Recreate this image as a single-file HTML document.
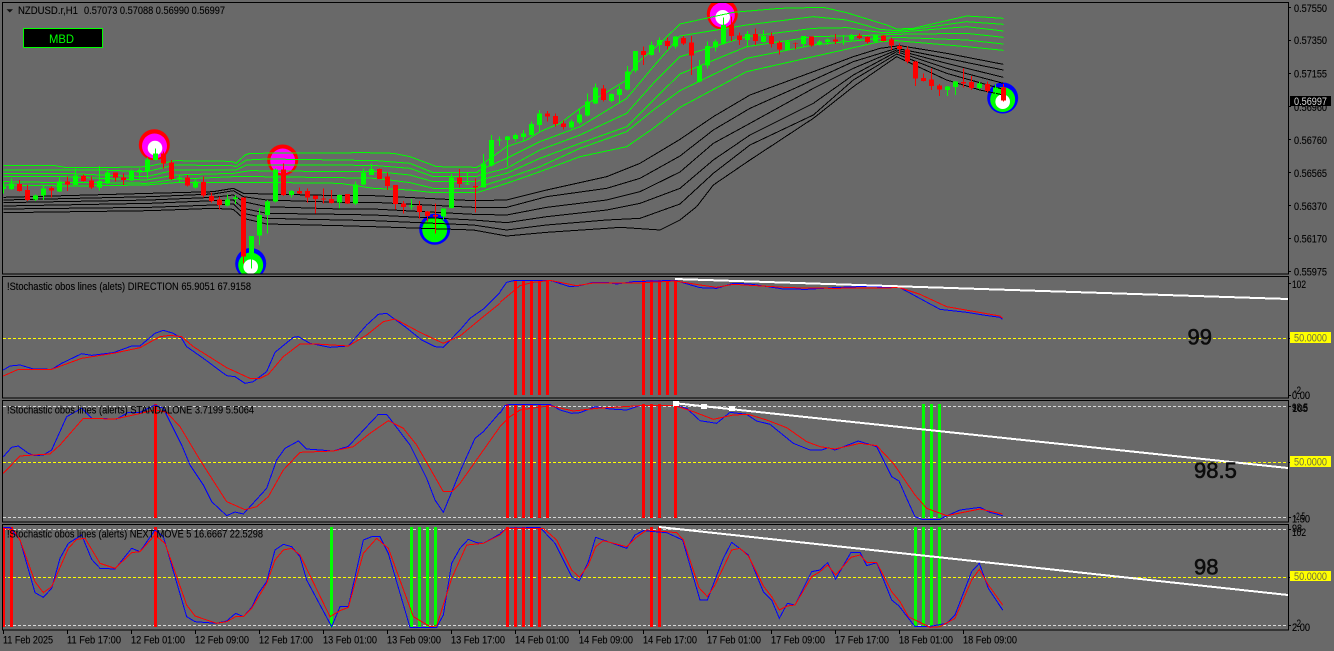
<!DOCTYPE html>
<html><head><meta charset="utf-8"><style>
html,body{margin:0;padding:0;background:#696969;width:1334px;height:651px;overflow:hidden}
svg{position:absolute;left:0;top:0;display:block}
polyline{fill:none;vector-effect:non-scaling-stroke;shape-rendering:crispEdges;stroke-width:1}
line{shape-rendering:crispEdges}
rect,path.c{shape-rendering:crispEdges}
text{font-family:"Liberation Sans",sans-serif;font-size:11px;fill:#000;stroke:#000;stroke-width:.12px}
.g polyline{stroke:#00ff00}
.k polyline{stroke:#000}
.b{stroke:#0000ff}
.r{stroke:#ff0000}
.y{stroke:#ffff00;stroke-dasharray:3 2}
.w{stroke:#d8d8d8;stroke-dasharray:3 2}
.big{font-size:22px;fill:#0c0c0c;stroke:#0c0c0c;stroke-width:.6px}
.nos{stroke:none}
</style></head><body>
<svg width="1334" height="651" viewBox="0 0 1334 651" xmlns="http://www.w3.org/2000/svg">
<defs>
<clipPath id="m"><rect x="3" y="3" width="1285" height="271"/></clipPath>
</defs>
<rect width="1334" height="651" fill="#696969"/>

<!-- dashed levels -->
<line class="y" x1="3" x2="1288" y1="338.5" y2="338.5"/>
<line class="y" x1="3" x2="1288" y1="462.5" y2="462.5"/>
<line class="y" x1="3" x2="1288" y1="577.5" y2="577.5"/>
<line class="w" x1="3" x2="1288" y1="406.5" y2="406.5"/>
<line class="w" x1="3" x2="1288" y1="517.5" y2="517.5"/>
<line class="w" x1="3" x2="1288" y1="529.5" y2="529.5"/>
<line class="w" x1="3" x2="1288" y1="625.5" y2="625.5"/>

<!-- main chart -->
<g clip-path="url(#m)">
<circle cx="154.3" cy="144.7" r="15.5" fill="#f00"/><circle cx="154.5" cy="146" r="12.5" fill="#f0f"/><circle cx="155" cy="148" r="7.3" fill="#fff"/>
<circle cx="282.7" cy="160" r="15.5" fill="#f00"/><circle cx="282.7" cy="161" r="12.5" fill="#f0f"/>
<circle cx="250.7" cy="263.5" r="15.5" fill="#00f"/><circle cx="250.7" cy="265" r="12.5" fill="#0f0"/><circle cx="250.7" cy="266.7" r="7.3" fill="#fff"/>
<circle cx="434.7" cy="229.3" r="15.5" fill="#00f"/><circle cx="434.7" cy="229.8" r="12.5" fill="#0f0"/>
<circle cx="722.3" cy="14" r="15.5" fill="#f00"/><circle cx="722.3" cy="15" r="12.5" fill="#f0f"/><circle cx="722.7" cy="17.3" r="7.3" fill="#fff"/>
<circle cx="1002.7" cy="98" r="15.5" fill="#00f"/><circle cx="1002.7" cy="99.5" r="12.5" fill="#0f0"/><circle cx="1002.7" cy="101.7" r="7.3" fill="#fff"/>

<g transform="scale(.33333)">
<g class="g">
<polyline points="10,497 165,497 200,503 300,503 440,500 525,482 695,484 708,490 735,465 750,460 1100,458 1180,460 1230,470 1270,485 1310,500 1430,502 1440,497 1520,440 1580,420 1620,395 1680,370 1740,325 1780,300 1880,240 1910,190 1980,130 2040,72 2200,37 2340,25 2470,22 2540,38 2660,75 2690,87 2740,85 2900,48 3010,55"/>
<polyline points="10,510 165,510 300,510 440,515 525,495 695,497 708,500 740,480 800,477 1020,480 1130,482 1230,490 1300,518 1430,518 1440,510 1520,475 1620,425 1740,380 1880,295 1960,200 2040,108 2240,75 2440,50 2540,60 2640,88 2690,92 2740,88 2900,65 3010,73"/>
<polyline points="10,520 200,520 300,525 440,530 525,510 708,510 740,495 1020,495 1130,497 1230,505 1300,530 1430,530 1440,525 1520,505 1620,450 1740,405 1880,340 1960,250 2040,170 2240,110 2440,85 2540,83 2640,97 2690,97 2900,80 3010,93"/>
<polyline points="10,530 200,530 300,535 440,540 525,525 700,520 750,512 1020,515 1130,515 1230,525 1300,545 1430,545 1440,540 1520,520 1620,475 1740,430 1880,380 1960,300 2040,222 2240,140 2440,110 2640,105 2690,103 2900,100 3010,112"/>
<polyline points="10,545 200,548 300,548 440,550 525,538 700,530 770,530 1020,533 1130,535 1230,548 1300,565 1430,565 1440,560 1520,535 1620,500 1740,445 1880,395 1960,330 2040,272 2240,175 2440,135 2640,115 2690,112 2900,120 3010,132"/>
<polyline points="10,555 215,558 440,555 525,548 770,547 1020,550 1120,565 1230,570 1300,578 1430,578 1440,575 1520,550 1620,515 1740,470 1880,440 1960,385 2040,322 2240,215 2440,170 2640,125 2690,122 2900,140 3010,151"/>
</g>
<g class="k">
<polyline points="10,592 450,580 640,575 700,565 730,580 800,582 1020,587 1120,587 1420,602 1520,600 1640,570 1820,530 1920,490 2040,418 2140,350 2250,285 2440,215 2560,170 2640,145 2700,137 2840,160 3010,193"/>
<polyline points="10,600 450,590 640,582 700,572 730,590 800,600 1020,607 1120,607 1420,622 1520,622 1640,590 1820,565 1920,535 2040,468 2140,390 2250,325 2440,240 2560,185 2690,145 2840,175 3010,210"/>
<polyline points="10,608 450,600 640,592 700,585 730,605 800,620 1020,627 1120,627 1420,643 1520,645 1640,622 1820,600 1920,575 2040,516 2140,430 2250,370 2440,265 2560,205 2690,150 2840,190 3010,232"/>
<polyline points="10,618 450,610 640,602 700,600 730,625 800,640 1020,643 1120,645 1420,660 1520,668 1640,650 1820,630 1920,610 2040,565 2140,480 2250,405 2440,310 2560,225 2690,155 2840,205 3010,250"/>
<polyline points="10,627 450,622 640,615 700,612 730,640 800,655 1020,660 1120,662 1420,675 1520,690 1640,675 1820,660 1920,655 2040,612 2140,520 2250,435 2440,345 2560,240 2690,162 2840,220 3010,268"/>
<polyline points="10,638 450,632 640,625 700,628 730,655 800,672 1020,677 1120,680 1420,690 1520,708 1640,697 1820,685 1860,682 1980,690 2040,660 2090,620 2140,555 2250,480 2440,355 2560,260 2690,170 2840,240 2940,270 3010,285"/>
</g>
</g>

<g transform="scale(1,.33333)">
<path class="c" fill="#00ff00" d="M3 545h1V580h-1zM3 560h3V567h-3zM11 535h1V570h-1zM9 550h5V567h-5zM35 583h1V603h-1zM33 586h5V599h-5zM43 555h1V600h-1zM41 565h5V587h-5zM59 533h1V576h-1zM57 545h5V575h-5zM75 505h1V555h-1zM73 527h5V555h-5zM99 498h1V572h-1zM97 543h5V563h-5zM107 508h1V552h-1zM105 517h5V550h-5zM131 508h1V543h-1zM129 512h5V542h-5zM139 505h1V535h-1zM137 510h5V517h-5zM147 473h1V535h-1zM145 478h5V515h-5zM155 445h1V482h-1zM153 460h5V480h-5zM179 525h1V548h-1zM177 532h5V535h-5zM195 535h1V565h-1zM193 545h5V562h-5zM227 583h1V620h-1zM225 598h5V617h-5zM235 585h1V612h-1zM233 593h5V597h-5zM251 708h1V805h-1zM249 708h5V770h-5zM259 625h1V735h-1zM257 645h5V707h-5zM267 600h1V700h-1zM265 605h5V645h-5zM275 505h1V608h-1zM273 508h5V605h-5zM291 570h1V593h-1zM289 573h5V585h-5zM339 583h1V625h-1zM337 585h5V608h-5zM355 545h1V615h-1zM353 553h5V610h-5zM363 505h1V555h-1zM361 518h5V553h-5zM371 490h1V525h-1zM369 507h5V525h-5zM411 597h1V628h-1zM409 617h5V620h-5zM443 625h1V660h-1zM441 625h5V650h-5zM451 522h1V625h-1zM449 532h5V624h-5zM467 518h1V555h-1zM465 550h5V553h-5zM483 462h1V563h-1zM481 490h5V562h-5zM491 405h1V500h-1zM489 420h5V497h-5zM499 410h1V438h-1zM497 418h5V422h-5zM507 408h1V500h-1zM505 410h5V420h-5zM515 400h1V425h-1zM513 405h5V417h-5zM523 390h1V425h-1zM521 400h5V411h-5zM531 365h1V407h-1zM529 372h5V405h-5zM539 330h1V397h-1zM537 340h5V375h-5zM571 358h1V385h-1zM569 364h5V382h-5zM579 325h1V372h-1zM577 343h5V368h-5zM587 280h1V350h-1zM585 305h5V347h-5zM595 250h1V312h-1zM593 262h5V310h-5zM611 280h1V308h-1zM609 282h5V303h-5zM619 258h1V310h-1zM617 267h5V285h-5zM627 198h1V272h-1zM625 214h5V268h-5zM635 153h1V218h-1zM633 153h5V212h-5zM651 125h1V167h-1zM649 135h5V165h-5zM659 112h1V157h-1zM657 120h5V135h-5zM675 108h1V145h-1zM673 110h5V140h-5zM699 180h1V248h-1zM697 198h5V245h-5zM707 125h1V205h-1zM705 138h5V197h-5zM715 118h1V155h-1zM713 125h5V143h-5zM723 52h1V133h-1zM721 75h5V130h-5zM747 93h1V143h-1zM745 102h5V120h-5zM763 90h1V128h-1zM761 108h5V126h-5zM787 122h1V150h-1zM785 125h5V150h-5zM803 108h1V143h-1zM801 108h5V132h-5zM819 120h1V137h-1zM817 124h5V134h-5zM827 115h1V135h-1zM825 118h5V126h-5zM843 105h1V135h-1zM841 121h5V123h-5zM851 102h1V122h-1zM849 105h5V118h-5zM875 103h1V127h-1zM873 106h5V125h-5zM947 258h1V288h-1zM945 259h5V270h-5zM955 243h1V285h-1zM953 244h5V261h-5zM979 245h1V268h-1zM977 251h5V264h-5zM995 253h1V282h-1zM993 263h5V278h-5z"/>
<path class="c" fill="#ff0000" d="M19 540h1V575h-1zM17 552h5V573h-5zM27 555h1V603h-1zM25 570h5V600h-5zM51 560h1V592h-1zM49 564h5V572h-5zM67 530h1V573h-1zM65 545h5V553h-5zM83 523h1V545h-1zM81 528h5V543h-5zM91 530h1V567h-1zM89 541h5V563h-5zM115 517h1V545h-1zM113 517h5V533h-5zM123 520h1V555h-1zM121 532h5V540h-5zM163 455h1V505h-1zM161 460h5V490h-5zM171 480h1V540h-1zM169 487h5V537h-5zM187 525h1V560h-1zM185 532h5V557h-5zM203 530h1V592h-1zM201 546h5V587h-5zM211 578h1V608h-1zM209 588h5V603h-5zM219 590h1V628h-1zM217 598h5V615h-5zM243 592h1V790h-1zM241 593h5V770h-5zM283 490h1V588h-1zM281 508h5V585h-5zM299 562h1V582h-1zM297 573h5V580h-5zM307 565h1V608h-1zM305 573h5V593h-5zM315 587h1V640h-1zM313 587h5V597h-5zM323 565h1V610h-1zM321 595h5V598h-5zM331 570h1V610h-1zM329 597h5V609h-5zM347 582h1V612h-1zM345 582h5V611h-5zM379 505h1V537h-1zM377 507h5V537h-5zM387 518h1V570h-1zM385 530h5V558h-5zM395 555h1V628h-1zM393 555h5V612h-5zM403 603h1V640h-1zM401 611h5V621h-5zM419 603h1V655h-1zM417 617h5V636h-5zM427 633h1V665h-1zM425 634h5V648h-5zM435 610h1V700h-1zM433 645h5V650h-5zM459 507h1V563h-1zM457 532h5V552h-5zM475 535h1V638h-1zM473 558h5V563h-5zM547 333h1V365h-1zM545 340h5V350h-5zM555 340h1V380h-1zM553 348h5V372h-5zM563 362h1V388h-1zM561 370h5V381h-5zM603 255h1V305h-1zM601 265h5V300h-5zM643 140h1V195h-1zM641 153h5V165h-5zM667 113h1V148h-1zM665 123h5V138h-5zM683 108h1V135h-1zM681 114h5V130h-5zM691 108h1V225h-1zM689 128h5V167h-5zM731 50h1V123h-1zM729 75h5V108h-5zM739 98h1V135h-1zM737 107h5V120h-5zM755 85h1V135h-1zM753 102h5V123h-5zM771 98h1V143h-1zM769 108h5V132h-5zM779 123h1V163h-1zM777 128h5V148h-5zM795 127h1V147h-1zM793 129h5V131h-5zM811 110h1V140h-1zM809 110h5V136h-5zM835 102h1V132h-1zM833 118h5V125h-5zM859 100h1V117h-1zM857 106h5V114h-5zM867 110h1V130h-1zM865 111h5V126h-5zM883 105h1V125h-1zM881 106h5V123h-5zM891 112h1V150h-1zM889 118h5V137h-5zM899 130h1V162h-1zM897 138h5V147h-5zM907 140h1V190h-1zM905 148h5V185h-5zM915 183h1V258h-1zM913 184h5V236h-5zM923 220h1V245h-1zM921 234h5V243h-5zM931 205h1V270h-1zM929 238h5V258h-5zM939 252h1V288h-1zM937 256h5V269h-5zM963 205h1V263h-1zM961 246h5V250h-5zM971 228h1V270h-1zM969 246h5V264h-5zM987 245h1V278h-1zM985 252h5V273h-5zM1003 252h1V305h-1zM1001 262h5V302h-5z"/>
</g>
</g>

<!-- signal bars -->
<g fill="#ff0000">
<rect x="514" y="280" width="3" height="115"/><rect x="522" y="280" width="3" height="115"/><rect x="530" y="280" width="3" height="115"/><rect x="538" y="280" width="3" height="115"/><rect x="546" y="280" width="3" height="115"/>
<rect x="642" y="280" width="3" height="115"/><rect x="650" y="280" width="3" height="115"/><rect x="658" y="280" width="3" height="115"/><rect x="666" y="280" width="3" height="115"/><rect x="674" y="280" width="3" height="115"/>
<rect x="154" y="404" width="3" height="114"/><rect x="506" y="404" width="3" height="114"/><rect x="514" y="404" width="3" height="114"/><rect x="522" y="404" width="3" height="114"/><rect x="530" y="404" width="3" height="114"/><rect x="538" y="404" width="3" height="114"/><rect x="546" y="404" width="3" height="114"/>
<rect x="642" y="404" width="3" height="114"/><rect x="650" y="404" width="3" height="114"/><rect x="658" y="404" width="3" height="114"/><rect x="674" y="404" width="3" height="114"/>
<rect x="3" y="527" width="2" height="100"/><rect x="10" y="527" width="3" height="100"/><rect x="154" y="527" width="3" height="100"/>
<rect x="506" y="527" width="3" height="100"/><rect x="514" y="527" width="3" height="100"/><rect x="522" y="527" width="3" height="100"/><rect x="530" y="527" width="3" height="100"/><rect x="538" y="527" width="3" height="100"/>
<rect x="650" y="527" width="3" height="100"/><rect x="658" y="527" width="3" height="100"/>
</g>
<g fill="#00ff00">
<rect x="922" y="404" width="3" height="114"/><rect x="930" y="404" width="3" height="114"/><rect x="938" y="404" width="3" height="114"/>
<rect x="330" y="527" width="3" height="100"/><rect x="410" y="527" width="3" height="100"/><rect x="418" y="527" width="3" height="100"/><rect x="426" y="527" width="3" height="100"/><rect x="434" y="527" width="3" height="100"/>
<rect x="914" y="527" width="3" height="100"/><rect x="922" y="527" width="3" height="100"/><rect x="930" y="527" width="3" height="100"/><rect x="938" y="527" width="3" height="100"/>
</g>

<!-- stochastic curves panels 1,2 -->
<g transform="translate(0,275) scale(.33333)">
<polyline class="b" points="10,285 30,273 60,270 100,282 155,283 185,265 245,236 275,241 340,233 395,213 420,213 465,175 490,166 520,175 545,190 560,215 610,250 680,302 705,305 735,325 760,320 800,290 825,232 880,187 895,185 930,205 990,217 1045,213 1100,150 1135,118 1160,115 1215,155 1265,195 1305,215 1330,217 1380,165 1410,130 1450,102 1500,52"/>
<polyline class="r" points="10,303 55,283 155,283 245,250 340,235 420,218 480,185 510,181 545,185 580,215 680,278 750,310 780,310 805,298 850,245 900,207 950,207 1045,213 1100,180 1150,140 1185,132 1260,172 1330,205 1380,183 1450,125 1500,85"/>
<polyline class="b" points="10,545 35,517 55,513 85,535 105,542 130,540 155,525 200,425 245,400 275,430 350,432 385,412 420,412 465,390 490,400 545,510 570,570 610,630 635,680 680,722 705,711 730,717 800,640 830,555 855,520 895,498 920,522 1000,528 1045,514 1100,455 1135,418 1160,418 1230,510 1280,610 1305,675 1330,712 1380,590 1425,490 1450,470 1500,412"/>
<polyline class="r" points="10,595 60,543 100,540 150,537 180,510 250,430 345,432 400,420 465,405 500,412 540,455 600,555 680,680 735,704 770,695 805,665 850,585 900,532 1000,528 1060,515 1110,475 1165,437 1210,460 1250,510 1330,650 1355,650 1380,625 1500,455"/>
<g transform="translate(1500,0)">
<polyline class="b" points="0,50 20,22 45,16 150,16 210,35 240,32 280,22 320,22 350,27 400,20 525,16 600,38 650,40 700,25 750,27 850,42 920,43 1000,38 1100,34 1200,38 1320,103 1400,112 1450,120 1500,127 1508,133"/>
<polyline class="r" points="0,82 60,32 100,22 150,16 230,32 280,24 420,24 525,18 600,30 650,37 700,28 870,38 1000,40 1200,38 1260,58 1340,95 1500,123 1508,130"/>
<polyline class="b" points="0,415 15,392 30,388 150,388 180,405 215,415 240,413 285,395 330,402 380,405 420,392 525,392 560,400 600,437 650,445 690,412 740,418 770,438 810,448 880,505 930,525 965,525 985,518 1005,525 1075,498 1130,515 1175,605 1197,618 1220,670 1245,725 1265,733 1320,733 1335,725 1380,705 1440,697 1470,712 1508,722"/>
<polyline class="r" points="0,455 30,425 60,405 150,392 220,408 290,400 420,392 525,392 580,410 640,433 700,420 745,418 800,435 860,458 920,500 960,515 1005,522 1080,505 1130,512 1180,565 1245,660 1280,700 1340,722 1440,702 1508,717"/>
</g>
</g>
<!-- panel 3 -->
<g transform="translate(0,520) scale(.33333)">
<polyline class="b" points="10,22 30,22 60,60 105,218 130,232 155,205 180,115 205,70 245,45 275,118 300,145 345,147 395,85 420,95 465,30 490,50 560,290 585,305 650,310 680,303 707,280 730,290 755,262 775,220 800,185 825,90 850,73 875,80 900,110 920,180 995,320 1020,260 1045,260 1090,60 1115,50 1140,50 1165,100 1230,322 1310,322 1330,285 1355,130 1380,85 1405,58 1430,68 1450,70 1500,42"/>
<polyline class="r" points="10,25 40,30 60,60 105,185 130,218 155,200 205,85 230,58 255,55 300,130 345,145 395,98 420,95 465,45 495,70 560,255 585,288 650,310 680,305 707,290 730,290 755,265 800,190 825,120 850,90 875,85 900,105 990,290 1020,272 1045,262 1090,100 1130,55 1165,85 1240,290 1290,320 1310,318 1355,175 1400,75 1450,70 1500,45"/>
<g transform="translate(1500,0)">
<polyline class="b" points="0,40 20,25 120,22 165,70 215,170 238,183 265,125 287,52 380,85 405,45 430,32 500,38 548,60 600,240 622,240 670,115 695,67 745,105 790,215 815,240 838,295 862,250 885,255 935,155 960,150 983,128 1007,177 1053,97 1080,97 1100,137 1130,128 1175,240 1197,258 1245,320 1285,320 1340,310 1365,285 1415,155 1438,130 1465,205 1508,270"/>
<polyline class="r" points="0,45 20,25 130,25 170,60 215,150 238,172 265,135 287,80 310,62 380,80 405,55 440,30 530,38 550,60 597,203 622,230 645,195 695,90 720,85 745,108 790,198 815,230 838,270 862,258 885,255 935,170 960,155 983,135 1007,165 1053,112 1080,105 1100,127 1130,127 1175,215 1200,245 1225,290 1290,322 1320,320 1365,295 1415,180 1438,148 1465,195 1508,255"/>
</g>
</g>

<!-- white trend lines -->
<g stroke="#fff" stroke-width="2">
<line x1="675" y1="279" x2="1288" y2="299"/>
<line x1="673" y1="403" x2="1288" y2="468"/>
<line x1="659" y1="527" x2="1288" y2="595"/>
</g>
<g fill="#fff"><rect x="673" y="401" width="6" height="5"/><rect x="701" y="404" width="6" height="5"/><rect x="729" y="406" width="6" height="5"/></g>

<!-- panel frames -->
<g fill="none" stroke="#000" stroke-width="1" shape-rendering="crispEdges">
<rect x="2.5" y="2.5" width="1286" height="271.5"/>
<rect x="2.5" y="276.5" width="1286" height="121.5"/>
<rect x="2.5" y="400.5" width="1286" height="121.5"/>
<rect x="2.5" y="524.5" width="1286" height="105.5"/>
</g>
<path class="c" fill="#000" d="M1288 7h3v1h-3zM1288 40h3v1h-3zM1288 73h3v1h-3zM1288 106h3v1h-3zM1288 139h3v1h-3zM1288 172h3v1h-3zM1288 205h3v1h-3zM1288 238h3v1h-3zM1288 271h3v1h-3zM3 630h1v4h-1zM67 630h1v4h-1zM131 630h1v4h-1zM195 630h1v4h-1zM259 630h1v4h-1zM323 630h1v4h-1zM387 630h1v4h-1zM451 630h1v4h-1zM515 630h1v4h-1zM579 630h1v4h-1zM643 630h1v4h-1zM707 630h1v4h-1zM771 630h1v4h-1zM835 630h1v4h-1zM899 630h1v4h-1zM963 630h1v4h-1zM1288 283h3v1h-3zM1288 338h3v1h-3zM1288 395h3v1h-3zM1288 406h3v1h-3zM1288 462h3v1h-3zM1288 517h3v1h-3zM1288 529h3v1h-3zM1288 577h3v1h-3zM1288 625h3v1h-3z"/>

<!-- header -->
<path d="M6.5 9.3h6.5l-3.2 3.2z" fill="#111"/>
<text x="18" y="14" textLength="60" lengthAdjust="spacingAndGlyphs">NZDUSD.r,H1</text>
<text x="84" y="14" textLength="141" lengthAdjust="spacingAndGlyphs">0.57073 0.57088 0.56990 0.56997</text>
<rect x="23.5" y="28.5" width="79" height="19" fill="#000" stroke="#00ff00" shape-rendering="crispEdges"/>
<text class="nos" x="49" y="43" textLength="25" lengthAdjust="spacingAndGlyphs" style="fill:#00ff00;font-size:12px">MBD</text>

<!-- titles -->
<text x="7" y="290" textLength="244" lengthAdjust="spacingAndGlyphs">!Stochastic obos lines (alets) DIRECTION 65.9051 67.9158</text>
<text x="7" y="413.500" textLength="247" lengthAdjust="spacingAndGlyphs">!Stochastic obos lines (alerts) STANDALONE 3.7199 5.5064</text>
<text x="7" y="537.500" textLength="256" lengthAdjust="spacingAndGlyphs">!Stochastic obos lines (alerts) NEXT MOVE 5 16.6667 22.5298</text>

<!-- price axis -->
<g>
<text x="1294" y="12" textLength="33" lengthAdjust="spacingAndGlyphs">0.57550</text>
<text x="1294" y="44" textLength="33" lengthAdjust="spacingAndGlyphs">0.57350</text>
<text x="1294" y="77.500" textLength="33" lengthAdjust="spacingAndGlyphs">0.57155</text>
<text x="1294" y="111" textLength="33" lengthAdjust="spacingAndGlyphs">0.56960</text>
<text x="1294" y="144" textLength="33" lengthAdjust="spacingAndGlyphs">0.56760</text>
<text x="1294" y="177" textLength="33" lengthAdjust="spacingAndGlyphs">0.56565</text>
<text x="1294" y="210" textLength="33" lengthAdjust="spacingAndGlyphs">0.56370</text>
<text x="1294" y="242.500" textLength="33" lengthAdjust="spacingAndGlyphs">0.56170</text>
<text x="1294" y="275.500" textLength="33" lengthAdjust="spacingAndGlyphs">0.55975</text>
</g>
<rect x="1290" y="96" width="41" height="10" fill="#000"/>
<text class="nos" x="1294" y="105" textLength="33" lengthAdjust="spacingAndGlyphs" style="fill:#d8d8d8">0.56997</text>

<!-- sub axis -->
<text x="1292" y="288" textLength="14" lengthAdjust="spacingAndGlyphs">102</text>
<text x="1294" y="394" textLength="7" lengthAdjust="spacingAndGlyphs">-2</text>
<text x="1292" y="399" textLength="18" lengthAdjust="spacingAndGlyphs">0.00</text>
<text x="1292" y="411" textLength="16" lengthAdjust="spacingAndGlyphs">98.5</text>
<text x="1292" y="412" textLength="16" lengthAdjust="spacingAndGlyphs">105</text>
<text x="1294" y="520" textLength="11" lengthAdjust="spacingAndGlyphs">-2.5</text>
<text x="1292" y="522.500" textLength="18" lengthAdjust="spacingAndGlyphs">1.50</text>
<text x="1292" y="532" textLength="10" lengthAdjust="spacingAndGlyphs">98</text>
<text x="1292" y="536" textLength="14" lengthAdjust="spacingAndGlyphs">102</text>
<text x="1294" y="627" textLength="7" lengthAdjust="spacingAndGlyphs">-2</text>
<text x="1292" y="631" textLength="18" lengthAdjust="spacingAndGlyphs">2.00</text>

<!-- yellow labels -->
<g fill="#ffff00">
<rect x="1290" y="332" width="41" height="11"/><rect x="1290" y="456" width="41" height="11"/><rect x="1290" y="571" width="41" height="10"/>
</g>
<g style="font-size:11px">
<text class="nos" x="1294" y="341.500" textLength="33" lengthAdjust="spacingAndGlyphs" style="fill:#707040">50.0000</text>
<text class="nos" x="1294" y="465.500" textLength="33" lengthAdjust="spacingAndGlyphs" style="fill:#707040">50.0000</text>
<text class="nos" x="1294" y="580" textLength="33" lengthAdjust="spacingAndGlyphs" style="fill:#707040">50.0000</text>
</g>

<!-- big numbers -->
<text class="big" x="1187.500" y="344.500">99</text>
<text class="big" x="1194" y="478">98.5</text>
<text class="big" x="1194" y="574.500">98</text>

<!-- time axis -->
<text x="3" y="643.500" textLength="50" lengthAdjust="spacingAndGlyphs">11 Feb 2025</text>
<text x="67" y="643.500" textLength="54" lengthAdjust="spacingAndGlyphs">11 Feb 17:00</text>
<text x="131" y="643.500" textLength="54" lengthAdjust="spacingAndGlyphs">12 Feb 01:00</text>
<text x="195" y="643.500" textLength="54" lengthAdjust="spacingAndGlyphs">12 Feb 09:00</text>
<text x="259" y="643.500" textLength="54" lengthAdjust="spacingAndGlyphs">12 Feb 17:00</text>
<text x="323" y="643.500" textLength="54" lengthAdjust="spacingAndGlyphs">13 Feb 01:00</text>
<text x="387" y="643.500" textLength="54" lengthAdjust="spacingAndGlyphs">13 Feb 09:00</text>
<text x="451" y="643.500" textLength="54" lengthAdjust="spacingAndGlyphs">13 Feb 17:00</text>
<text x="515" y="643.500" textLength="54" lengthAdjust="spacingAndGlyphs">14 Feb 01:00</text>
<text x="579" y="643.500" textLength="54" lengthAdjust="spacingAndGlyphs">14 Feb 09:00</text>
<text x="643" y="643.500" textLength="54" lengthAdjust="spacingAndGlyphs">14 Feb 17:00</text>
<text x="707" y="643.500" textLength="54" lengthAdjust="spacingAndGlyphs">17 Feb 01:00</text>
<text x="771" y="643.500" textLength="54" lengthAdjust="spacingAndGlyphs">17 Feb 09:00</text>
<text x="835" y="643.500" textLength="54" lengthAdjust="spacingAndGlyphs">17 Feb 17:00</text>
<text x="899" y="643.500" textLength="54" lengthAdjust="spacingAndGlyphs">18 Feb 01:00</text>
<text x="963" y="643.500" textLength="54" lengthAdjust="spacingAndGlyphs">18 Feb 09:00</text>
</svg>
</body></html>
